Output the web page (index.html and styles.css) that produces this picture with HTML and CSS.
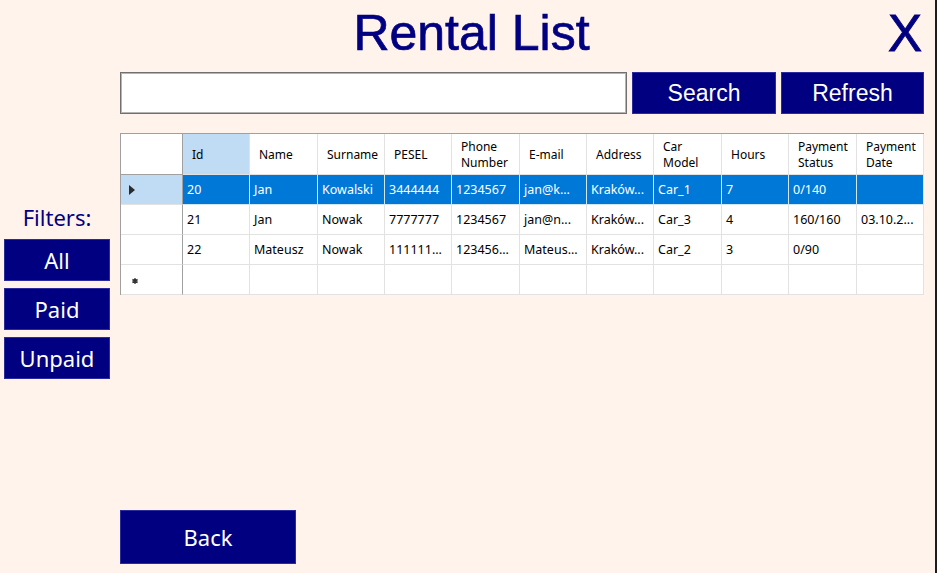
FILE: index.html
```html
<!DOCTYPE html>
<html lang="en">
<head>
<meta charset="utf-8">
<title>Rental List</title>
<link rel="stylesheet" href="styles.css">
</head>
<body>
<div class="app">
  <header class="topbar">
    <div class="spacer"></div>
    <h1 class="title">Rental List</h1>
    <button class="close">X</button>
  </header>
  <div class="content">
    <aside class="sidebar">
      <div class="filters-label">Filters:</div>
      <button class="btn filter">All</button>
      <button class="btn filter">Paid</button>
      <button class="btn filter">Unpaid</button>
    </aside>
    <main class="main">
      <div class="search-row">
        <input class="search-input" type="text">
        <button class="btn action">Search</button>
        <button class="btn action">Refresh</button>
      </div>
      <table class="grid">
        <colgroup>
          <col class="c-rh"><col class="c67"><col class="c68"><col class="c67"><col class="c67"><col class="c68"><col class="c67"><col class="c67"><col class="c68"><col class="c67"><col class="c68"><col class="c67">
        </colgroup>
        <thead>
          <tr>
            <th class="corner"></th>
            <th class="sel-head">Id</th>
            <th>Name</th>
            <th>Surname</th>
            <th>PESEL</th>
            <th><span class="hl">Phone</span><span class="hl">Number</span></th>
            <th>E-mail</th>
            <th>Address</th>
            <th><span class="hl">Car</span><span class="hl">Model</span></th>
            <th>Hours</th>
            <th><span class="hl">Payment</span><span class="hl">Status</span></th>
            <th><span class="hl">Payment</span><span class="hl">Date</span></th>
          </tr>
        </thead>
        <tbody>
          <tr class="selected">
            <td class="rowhead cur"><svg class="tri" width="6" height="10" viewBox="0 0 6 10"><polygon points="0,0 6,5 0,10" fill="#2b2b2b"/></svg></td>
            <td>20</td><td>Jan</td><td>Kowalski</td><td>3444444</td><td>1234567</td><td>jan@k...</td><td>Kraków...</td><td>Car_1</td><td>7</td><td>0/140</td><td></td>
          </tr>
          <tr>
            <td class="rowhead"></td>
            <td>21</td><td>Jan</td><td>Nowak</td><td>7777777</td><td>1234567</td><td>jan@n...</td><td>Kraków...</td><td>Car_3</td><td>4</td><td>160/160</td><td>03.10.2...</td>
          </tr>
          <tr>
            <td class="rowhead"></td>
            <td>22</td><td>Mateusz</td><td>Nowak</td><td>111111...</td><td>123456...</td><td>Mateus...</td><td>Kraków...</td><td>Car_2</td><td>3</td><td>0/90</td><td></td>
          </tr>
          <tr>
            <td class="rowhead"><svg class="star" width="6" height="6" viewBox="0 0 6 6"><path d="M3 0.2V5.8M0.4 1.5L5.6 4.5M0.4 4.5L5.6 1.5" stroke="#333333" stroke-width="1.7"/></svg></td>
            <td></td><td></td><td></td><td></td><td></td><td></td><td></td><td></td><td></td><td></td><td></td>
          </tr>
        </tbody>
      </table>
      <button class="btn back">Back</button>
    </main>
  </div>
</div>
</body>
</html>
```

FILE: styles.css
```css
* { box-sizing: border-box; }

html, body {
  margin: 0;
  padding: 0;
  background: #fff3ec;
}

.app {
  width: 937px;
  height: 573px;
  background: #fff3ec;
  border-right: 2px solid #1c1c1c;
  padding-top: 5px;
  overflow: hidden;
}

.topbar {
  display: grid;
  grid-template-columns: 1fr auto 1fr;
  height: 57px;
  margin-bottom: 10px;
}

.title {
  margin: 0;
  padding-left: 8px;
  font-family: "Liberation Sans", Arial, sans-serif;
  font-weight: normal;
  font-size: 50px;
  line-height: 57px;
  color: #000080;
  -webkit-text-stroke: 0.7px #000080;
}

.close {
  justify-self: end;
  margin: 0 13px 0 0;
  padding: 0;
  border: none;
  background: transparent;
  font-family: "Liberation Sans", Arial, sans-serif;
  font-size: 51px;
  line-height: 57px;
  color: #000080;
  -webkit-text-stroke: 0.9px #000080;
}

.content {
  display: flex;
}

.sidebar {
  width: 120px;
  padding: 132px 0 0 4px;
  display: flex;
  flex-direction: column;
}

.filters-label {
  width: 106px;
  height: 26px;
  margin-bottom: 9px;
  text-align: center;
  font-family: "Noto Sans", sans-serif;
  font-size: 22px;
  line-height: 26px;
  color: #000080;
}

.btn {
  margin: 0;
  padding: 0;
  background: #000080;
  color: #ffffff;
  border: 1px solid #2b2ba0;
  cursor: pointer;
}

.filter {
  width: 106px;
  height: 42px;
  margin-bottom: 7px;
  font-family: "Noto Sans", sans-serif;
  font-size: 22px;
}

.main {
  width: 804px;
  display: flex;
  flex-direction: column;
}

.search-row {
  display: flex;
  gap: 5px;
  height: 42px;
}

.search-input {
  width: 507px;
  height: 42px;
  margin: 0;
  border: 1px solid #707070;
  box-shadow: inset 0 0 0 1px #b4b4b4;
  background: #ffffff;
}

.action {
  width: 144px;
  height: 42px;
  font-family: "Liberation Sans", Arial, sans-serif;
  font-size: 23px;
}

.action:last-child {
  width: 143px;
}

.grid {
  margin-top: 19px;
  width: 804px;
  table-layout: fixed;
  border-collapse: separate;
  border-spacing: 0;
  border-top: 1px solid #a0a0a0;
  border-left: 1px solid #a0a0a0;
  font-family: "Noto Sans", sans-serif;
  font-size: 12.5px;
  color: #000;
}

.c-rh { width: 62px; }
.c67 { width: 67px; }
.c68 { width: 68px; }

.grid th {
  height: 41px;
  padding: 2px 0 0 9px;
  background: #ffffff;
  font-weight: normal;
  font-size: 12px;
  text-align: left;
  line-height: 16px;
  border-right: 1px solid #e2e2e2;
  border-bottom: 1px solid #e2e2e2;
  white-space: nowrap;
  overflow: hidden;
}

.hl {
  display: block;
  line-height: 16.5px;
}

.grid th.corner {
  border-right: 1px solid #a0a0a0;
  border-bottom: 1px solid #a0a0a0;
}

.grid th.sel-head {
  background: #bfdcf4;
}

.grid td {
  height: 30px;
  padding: 0 0 0 4px;
  background: #ffffff;
  border-right: 1px solid #e2e2e2;
  border-bottom: 1px solid #e2e2e2;
  white-space: nowrap;
  overflow: hidden;
}

.grid td.rowhead {
  padding: 0 0 0 8px;
  border-right: 1px solid #a0a0a0;
}

.grid td.rowhead.cur {
  background: #bfdcf4;
}

.tri, .star {
  display: block;
}

.star {
  margin-left: 3px;
  margin-top: 2px;
}

.grid tr.selected td {
  background: #0078d7;
  color: #ffffff;
  border-right-color: #d2e6f8;
  border-bottom-color: #d2e6f8;
}

.grid tr.selected td.rowhead {
  background: #bfdcf4;
  border-right-color: #a0a0a0;
  border-bottom-color: #e2e2e2;
}

.back {
  margin-top: 215px;
  width: 176px;
  height: 54px;
  font-family: "Noto Sans", sans-serif;
  font-size: 22px;
}
```
